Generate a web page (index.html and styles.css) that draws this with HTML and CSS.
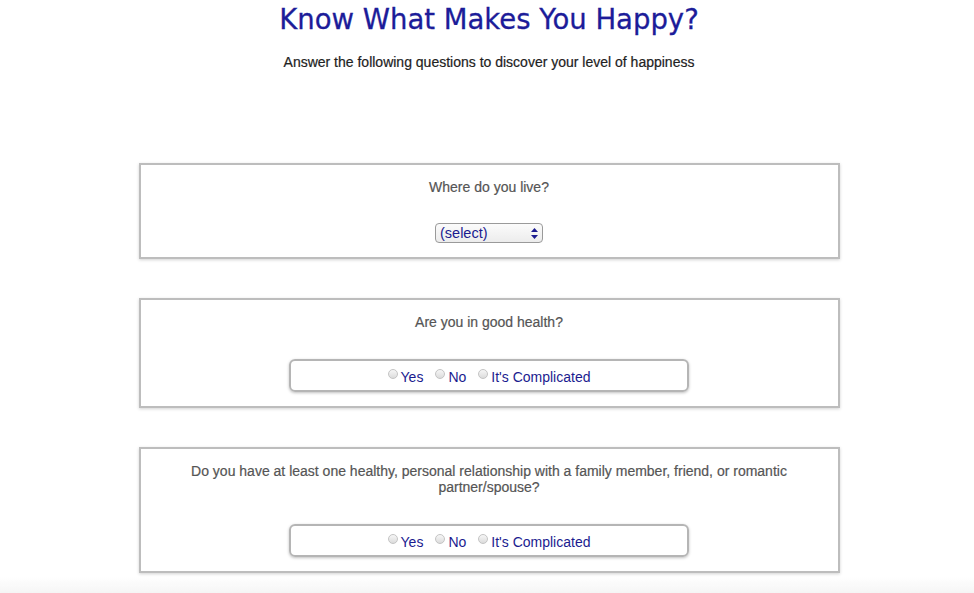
FILE: index.html
```html
<!DOCTYPE html>
<html>
<head>
<meta charset="utf-8">
<title>Know What Makes You Happy?</title>
<link rel="stylesheet" href="styles.css">
</head>
<body>
<header class="intro">
  <h1 class="title">Know What Makes You Happy?</h1>
  <p class="subtitle">Answer the following questions to discover your level of happiness</p>
</header>
<main class="quiz">
  <section class="card">
    <p class="question">Where do you live?</p>
    <div class="select-wrap">
      <span class="select-text">(select)</span>
      <svg class="select-arrows" width="7" height="11" viewBox="0 0 7 11"><path d="M3.5 0 L7 4 H0 Z M0 7 H7 L3.5 11 Z" fill="#1b1b8f"/></svg>
    </div>
  </section>
  <section class="card">
    <p class="question">Are you in good health?</p>
    <div class="choices">
      <label class="choice"><span class="radio"></span>Yes</label>
      <label class="choice"><span class="radio"></span>No</label>
      <label class="choice"><span class="radio"></span>It's Complicated</label>
    </div>
  </section>
  <section class="card">
    <p class="question">Do you have at least one healthy, personal relationship with a family member, friend, or romantic partner/spouse?</p>
    <div class="choices">
      <label class="choice"><span class="radio"></span>Yes</label>
      <label class="choice"><span class="radio"></span>No</label>
      <label class="choice"><span class="radio"></span>It's Complicated</label>
    </div>
  </section>
</main>
<div class="bottom-fade"></div>
</body>
</html>
```
FILE: styles.css
```css
html, body {
  margin: 0;
  padding: 0;
  background: #fff;
}
body {
  font-family: "Liberation Sans", Arial, sans-serif;
  padding-left: 4px;
}
.intro {
  text-align: center;
}
.title {
  margin: 0;
  padding-top: 1px;
  font-family: "DejaVu Sans", sans-serif;
  font-weight: normal;
  font-size: 27.5px;
  line-height: 36px;
  color: #1c1c99;
  -webkit-text-stroke: 0.3px #1c1c99;
}
.subtitle {
  margin: 17px 0 0;
  font-size: 14px;
  line-height: 16px;
  color: #222;
  -webkit-text-stroke: 0.2px #222;
}
.quiz {
  width: 701px;
  margin: 93px auto 0;
  display: flex;
  flex-direction: column;
  gap: 39px;
  padding-bottom: 40px;
}
.card {
  border: 2px solid #bdbdbd;
  box-shadow: 0 1px 3px rgba(0,0,0,0.18);
  padding: 14px 50px 14px;
  text-align: center;
}
.question {
  margin: 0;
  font-size: 14px;
  line-height: 16px;
  color: #555;
  -webkit-text-stroke: 0.2px #555;
}
.select-wrap {
  margin: 28px auto 0;
  height: 18px;
  border: 1px solid #9a9a9a;
  border-radius: 4px;
  background: linear-gradient(#fbfbfb, #ececec);
  display: flex;
  align-items: center;
  justify-content: space-between;
  padding: 0 4px;
  box-sizing: content-box;
  width: 98px;
}
.select-text {
  font-size: 14.5px;
  color: #1b1b8f;
}
.choices {
  margin: 29px auto 0;
  width: 396px;
  height: 29px;
  border: 2px solid #b5b5b5;
  border-radius: 6px;
  box-shadow: 0 1px 3px rgba(0,0,0,0.25);
  display: flex;
  justify-content: center;
  align-items: center;
  gap: 12px;
}
.choice {
  display: flex;
  align-items: center;
  font-size: 14px;
  color: #1b1b8f;
  padding-top: 2px;
}
.radio {
  width: 8px;
  height: 8px;
  border-radius: 50%;
  border: 1px solid #c4c4c4;
  background: linear-gradient(#f6f6f6, #dcdcdc);
  margin-right: 3px;
  position: relative;
  top: -3px;
}
.bottom-fade {
  position: fixed;
  left: 0;
  right: 0;
  bottom: 0;
  height: 16px;
  background: linear-gradient(rgba(245,245,245,0), #f5f5f5);
  pointer-events: none;
}
```
